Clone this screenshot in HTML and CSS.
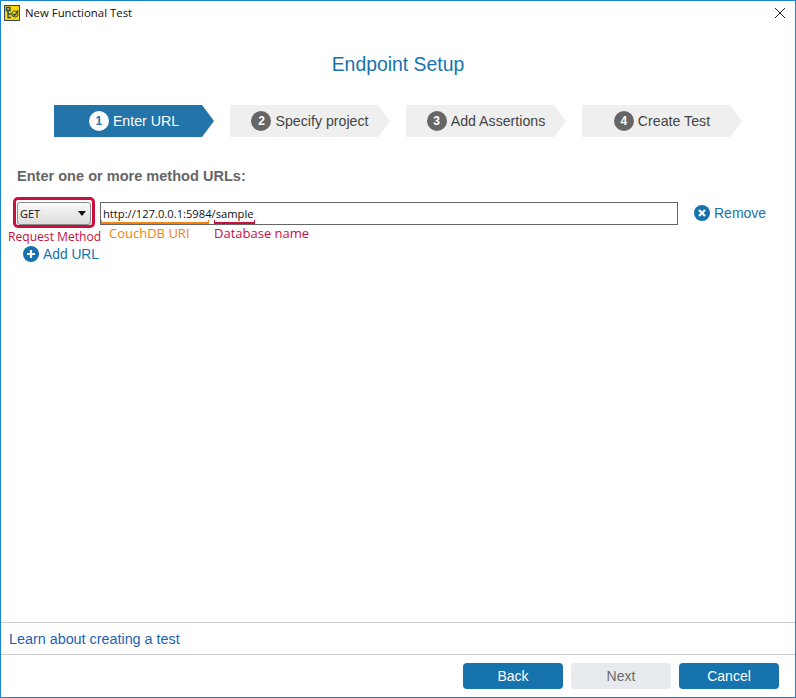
FILE: index.html
```html
<!DOCTYPE html>
<html lang="en">
<head>
<meta charset="utf-8">
<title>New Functional Test</title>
<link rel="stylesheet" href="styles.css">
</head>
<body>
<div class="window">
  <header class="titlebar">
    <svg class="appicon" width="16" height="16" viewBox="0 0 16 16">
      <rect x="0.5" y="0.5" width="15" height="15" fill="#fdd60a" stroke="#2f4a55"/>
      <path d="M2.5 2.5h3.5v3H2.5zM4 5.5v7h3M4 9h3.5" fill="none" stroke="#2f4a55" stroke-width="1.4"/>
      <circle cx="10.8" cy="9" r="3" fill="none" stroke="#4b6b45" stroke-width="1.2"/>
      <path d="M9.2 9l1.4 1.5 3.6-5" fill="none" stroke="#2f4a55" stroke-width="1.3"/>
    </svg>
    <span class="wintitle">New Functional Test</span>
    <svg class="close" width="10" height="10" viewBox="0 0 10 10"><path d="M0 0l10 10M10 0L0 10" stroke="#222" stroke-width="1" fill="none"/></svg>
  </header>

  <main class="content">
    <h1 class="heading">Endpoint Setup</h1>
    <ol class="steps">
      <li class="step active"><span class="num">1</span><span>Enter URL</span></li>
      <li class="step"><span class="num">2</span><span>Specify project</span></li>
      <li class="step"><span class="num">3</span><span>Add Assertions</span></li>
      <li class="step"><span class="num">4</span><span>Create Test</span></li>
    </ol>
    <p class="prompt">Enter one or more method URLs:</p>
    <div class="urlrow">
      <div class="method-highlight">
        <div class="select"><span>GET</span><i class="caret"></i></div>
      </div>
      <div class="urlinput">http://127.0.0.1:5984/sample</div>
      <a class="link remove">
        <svg width="16" height="16" viewBox="0 0 16 16"><circle cx="8" cy="8" r="8" fill="#1673ad"/><path d="M5 5l6 6M11 5l-6 6" stroke="#fff" stroke-width="2.2"/></svg>
        <span>Remove</span>
      </a>
    </div>
    <div class="annotations">
      <span class="note method">Request Method</span>
      <span class="note uri">CouchDB URI</span>
      <span class="note db">Database name</span>
    </div>
    <a class="link add">
      <svg width="16" height="16" viewBox="0 0 16 16"><circle cx="8" cy="8" r="8" fill="#1673ad"/><path d="M8 4v8M4 8h8" stroke="#fff" stroke-width="2.2"/></svg>
      <span>Add URL</span>
    </a>
  </main>

  <div class="learn"><a class="learnlink">Learn about creating a test</a></div>
  <footer class="buttons">
    <button class="btn">Back</button>
    <button class="btn disabled">Next</button>
    <button class="btn">Cancel</button>
  </footer>
</div>
</body>
</html>
```
FILE: styles.css
```css
*, *::before, *::after { box-sizing: border-box; }
html, body { margin: 0; padding: 0; height: 100%; }
body { background: #fff; font-family: "Liberation Sans", Arial, sans-serif; overflow: hidden; }
.window {
  width: 796px; height: 698px;
  border: 1px solid #1883d7;
  display: flex; flex-direction: column;
}
.titlebar { height: 23px; display: flex; align-items: center; padding-left: 3px; flex: none; }
.appicon { margin-right: 5px; }
.wintitle { font-family: "Open Sans", sans-serif; font-size: 11.4px; color: #111; }
.close { margin-left: auto; margin-right: 10px; }
.content { flex: 1; }
.heading { margin: 28px 0 0; text-align: center; font-size: 19.4px; font-weight: 400; color: #1673ad; line-height: 24px; height: 24px; }
.steps { list-style: none; margin: 29px 0 0 53px; padding: 0; display: flex; gap: 16px; }
.step {
  width: 160px; height: 32px;
  display: flex; align-items: center; justify-content: center; gap: 4px;
  background: #efefef; color: #444; font-size: 14.2px;
  clip-path: polygon(0 0, 148px 0, 160px 50%, 148px 100%, 0 100%);
}
.step.active { background: #2274a9; color: #fff; }
.num {
  width: 20px; height: 20px; border-radius: 50%;
  background: #666; color: #fff; font-weight: 700; font-size: 12px;
  display: flex; align-items: center; justify-content: center;
}
.active .num { background: #fff; color: #2274a9; }
.prompt { margin: 31px 0 0 16px; font-size: 14.55px; font-weight: 700; color: #666; line-height: 17px; }
.urlrow { display: flex; align-items: center; margin: 12px 0 0 12px; height: 31px; }
.method-highlight { width: 82px; height: 31px; border: 3px solid #c8103f; border-radius: 5px; padding: 2px 0 0 1px; flex: none; }
.select {
  width: 74px; height: 23px; border: 1px solid #8a8a8a; border-radius: 3px;
  background: linear-gradient(#fafafa, #dcdcdc);
  display: flex; align-items: center; justify-content: space-between;
  padding: 0 4px 0 2px;
  font-family: "Open Sans", sans-serif; font-size: 11px; color: #111;
}
.caret { width: 0; height: 0; border: 4.5px solid transparent; border-top: 5px solid #111; border-bottom: 0; }
.urlinput {
  width: 578px; height: 23px; margin: 2px 0 0 5px;
  border: 1px solid #666;
  padding: 0 0 0 2px; line-height: 21px;
  font-family: "Open Sans", sans-serif; font-size: 11.2px; color: #111;
}
.link { display: flex; align-items: center; color: #1673ad; font-size: 14px; gap: 4px; }
.remove { margin-left: 16px; }
.annotations { display: flex; margin-left: 7px; height: 17px; font-family: "Open Sans", sans-serif; font-size: 13px; line-height: 17px; white-space: nowrap; }
.note { display: block; position: relative; }
.method { width: 93px; color: #c8103f; font-size: 12.1px; }
.uri { width: 108px; padding-left: 8px; margin-top: -3px; color: #f5820a; }
.db { margin-left: 5px; margin-top: -3px; color: #c8103f; }
.uri::before, .db::before { content: ""; position: absolute; top: -5px; height: 4px; border: 1px solid currentColor; border-width: 0 1px 2px; }
.uri::before { left: 0; width: 108px; }
.db::before { left: 0; width: 41px; }
.add { margin: 0 0 0 22px; height: 18px; font-size: 13.8px; }
.learn { height: 32px; border-top: 1px solid #ccc; padding-left: 8px; line-height: 31px; flex: none; }
.learnlink { color: #1c62b4; font-size: 14.35px; }
.buttons { height: 43px; border-top: 1px solid #ccc; display: flex; justify-content: flex-end; gap: 8px; padding: 8px 16px 0 0; flex: none; }
.btn {
  width: 100px; height: 26px; border: 0; border-radius: 4px;
  background: #1673ad; color: #fff; font-family: "Liberation Sans", Arial, sans-serif; font-size: 14px; padding: 0;
}
.btn.disabled { background: #e8ebee; color: #6a6a6a; }
```
